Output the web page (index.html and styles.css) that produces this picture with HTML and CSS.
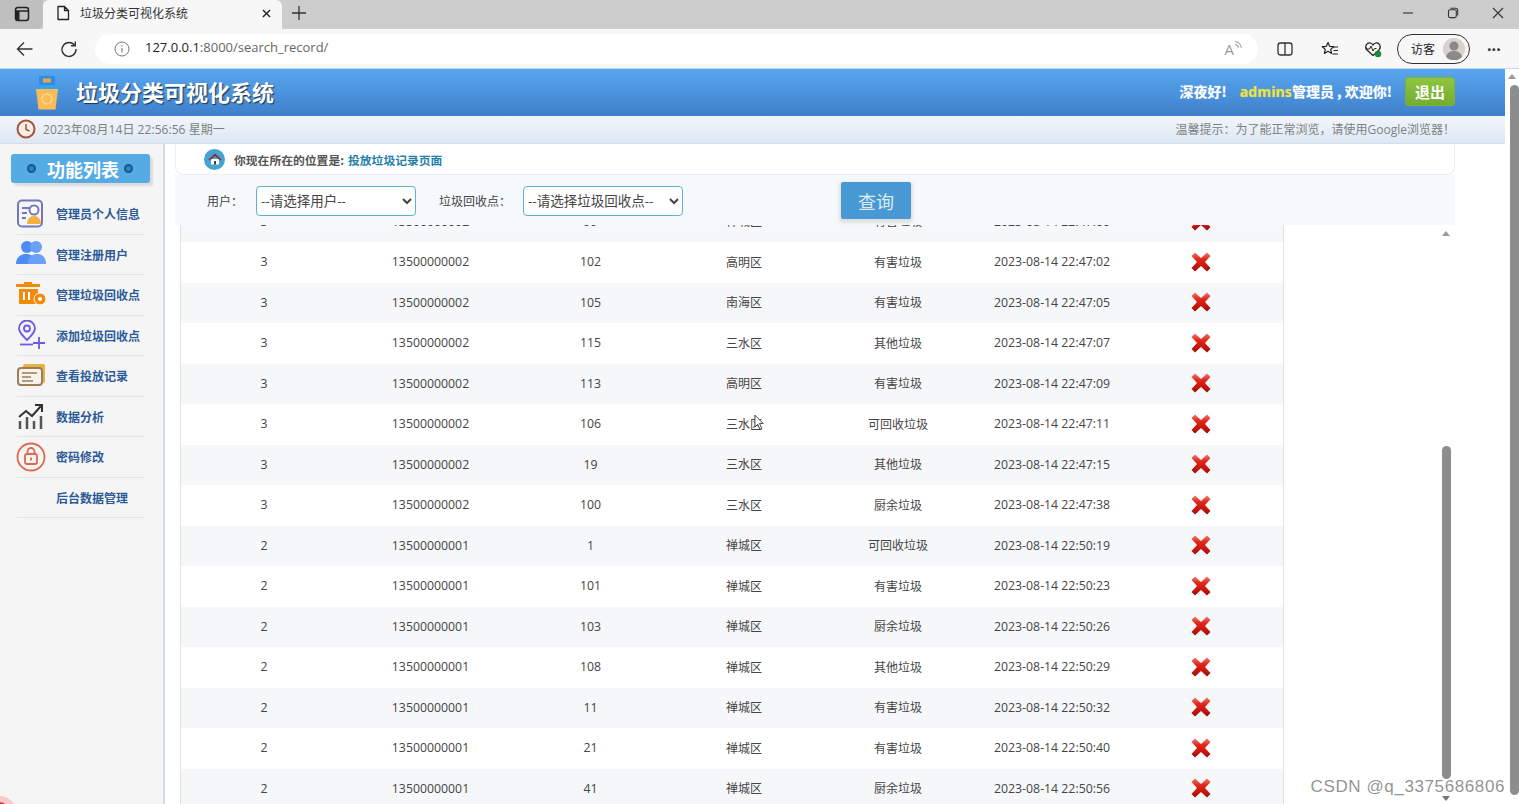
FILE: index.html
```html
<!DOCTYPE html>
<html lang="zh-CN">
<head>
<meta charset="utf-8">
<title>垃圾分类可视化系统</title>
<link rel="stylesheet" href="styles.css">
</head>
<body>
<svg class="defs" aria-hidden="true">
  <defs>
    <linearGradient id="xgrad" x1="0" y1="0" x2="0" y2="1">
      <stop offset="0" stop-color="#ee7a70"/>
      <stop offset=".35" stop-color="#e0271b"/>
      <stop offset=".75" stop-color="#c4140e"/>
      <stop offset="1" stop-color="#8e0f0a"/>
    </linearGradient>
    <symbol id="xmark" viewBox="0 0 22 22">
      <path d="M1.500 5L5 1.500 11 7 17 1.500 20.500 5 15 11 20.500 17 17 20.500 11 15 5 20.500 1.500 17 7 11z" fill="url(#xgrad)"/>
    </symbol>
  </defs>
</svg>
<div class="app">
  <div class="tabstrip">
    <div class="tabside">
      <svg class="ic20" viewBox="0 0 20 20"><rect x="3.500" y="3.500" width="13" height="13" rx="2.500" fill="none" stroke="#222" stroke-width="1.500"/><path d="M3.500 7h13" stroke="#222" stroke-width="1.500" fill="none"/><rect x="4" y="7" width="3.500" height="9" fill="#222"/></svg>
    </div>
    <div class="tab">
      <svg class="tabdoc" viewBox="0 0 14 16"><path d="M2 1.500h6.500L12.500 5.500V14.500H2z M8.500 1.500V5.500H12.500" fill="none" stroke="#222" stroke-width="1.300" stroke-linejoin="round"/></svg>
      <span class="tabtitle">垃圾分类可视化系统</span>
      <svg class="tabx" viewBox="0 0 10 10"><path d="M1 1l8 8M9 1l-8 8" stroke="#222" stroke-width="1.500"/></svg>
    </div>
    <svg class="tabplus" viewBox="0 0 14 14"><path d="M7 0v14M0 7h14" stroke="#333" stroke-width="1.300"/></svg>
    <div class="winctl">
      <svg class="winbtn" viewBox="0 0 12 12"><path d="M1 6h10" stroke="#333" stroke-width="1.100"/></svg>
      <svg class="winbtn" viewBox="0 0 12 12"><rect x="1.500" y="2.800" width="7.800" height="7.800" rx="1.500" fill="none" stroke="#333" stroke-width="1.100"/><path d="M3.500 1.300h5.200a2 2 0 0 1 2 2v5.200" fill="none" stroke="#333" stroke-width="1.100"/></svg>
      <svg class="winbtn" viewBox="0 0 12 12"><path d="M1 1l10 10M11 1L1 11" stroke="#333" stroke-width="1.100"/></svg>
    </div>
  </div>

  <div class="toolbar">
    <svg class="backbtn" viewBox="0 0 18 16"><path d="M1.500 8h15M8 1.500L1.500 8 8 14.500" fill="none" stroke="#333" stroke-width="1.400"/></svg>
    <svg class="reload" viewBox="0 0 18 18"><path d="M14.800 5.500A7 7 0 1 0 16 9" fill="none" stroke="#333" stroke-width="1.400"/><path d="M15.300 1.500v4.300h-4.300" fill="none" stroke="#333" stroke-width="1.400"/></svg>
    <div class="addr">
      <svg class="info" viewBox="0 0 16 16"><circle cx="8" cy="8" r="7" fill="none" stroke="#777" stroke-width="1"/><path d="M8 7v4.500M8 4.300v1.200" stroke="#777" stroke-width="1.100"/></svg>
      <span class="url"><b>127.0.0.1</b>:8000/search_record/</span>
      <span class="read">A<svg class="readwave" viewBox="0 0 8 9"><path d="M1 1.500a6 6 0 0 1 5.500 5.500M1 4a3.500 3.500 0 0 1 3 3" fill="none" stroke="#999" stroke-width="1"/></svg></span>
    </div>
    <svg class="tool split" viewBox="0 0 18 18"><rect x="2" y="3" width="14" height="12" rx="2.500" fill="none" stroke="#333" stroke-width="1.300"/><path d="M9 3v12" stroke="#333" stroke-width="1.300"/></svg>
    <svg class="tool fav" viewBox="0 0 18 18"><path d="M7 2.500l1.700 3.800 4 .4-3 2.700.9 4-3.600-2.100-3.600 2.100.9-4-3-2.700 4-.4z" fill="none" stroke="#222" stroke-width="1.200" stroke-linejoin="round"/><path d="M12 7h5M12.500 10.500h4.500M11.500 14h5.500" stroke="#222" stroke-width="1.100"/></svg>
    <svg class="tool health" viewBox="0 0 18 18"><path d="M9 15.500L3 10C0 6.500 3 2 6.500 3 8 3.500 8.500 4 9 5c.5-1 1-1.500 2.500-2C15 2 18 6.500 15 10z" fill="none" stroke="#222" stroke-width="1.200"/><path d="M1.500 9h4l1.500-3 2 5 1.500-2.500h2" fill="none" stroke="#222" stroke-width="1"/><circle cx="14" cy="14" r="3.300" fill="#1c8a3a"/></svg>
    <div class="guest">
      <span class="guesttxt">访客</span>
      <span class="avatar"><svg class="avatarsvg" viewBox="0 0 22 22"><circle cx="11" cy="11" r="11" fill="#d6d3cd"/><circle cx="11" cy="8" r="4.500" fill="#8b8985"/><path d="M3 19c1-5 5-6 8-6s7 1 8 6a11 11 0 0 1-16 0z" fill="#8b8985"/></svg></span>
    </div>
    <span class="more">···</span>
  </div>

  <div class="viewport">
    <div class="page">
      <header class="hdr">
        <svg class="logo" viewBox="0 0 26 34">
          <path d="M5 0h16v10H5z" fill="#2f8fe8"/>
          <path d="M9 2.500h8v4H9z" fill="#eda73a"/>
          <path d="M0 9h26l-1 4H1z" fill="#39a0ee"/>
          <path d="M2 13h22l-2.500 20.500h-17z" fill="#fbbb55"/>
          <circle cx="13" cy="23" r="5" fill="none" stroke="#f9d795" stroke-width="1.500"/>
        </svg>
        <h1 class="systitle">垃圾分类可视化系统</h1>
        <div class="welcome">
          <span class="greet">深夜好!</span>
          <span class="uname">admins</span><span>管理员 , 欢迎你!</span>
        </div>
        <a class="logout">退出</a>
      </header>

      <div class="subbar">
        <svg class="clock" viewBox="0 0 20 20"><circle cx="10" cy="10" r="8.500" fill="#f7efe6" stroke="#a9503f" stroke-width="2"/><path d="M10 5v5.500l3.500 1.500" fill="none" stroke="#a9503f" stroke-width="1.500"/></svg>
        <span class="datetime">2023年08月14日 22:56:56 星期一</span>
        <span class="tip">温馨提示：为了能正常浏览，请使用Google浏览器！</span>
      </div>

      <div class="body">
        <aside class="side">
          <div class="sidetitle"><i class="dot"></i><span>功能列表</span><i class="dot dotr"></i></div>
          <ul class="menu">
            <li class="mitem"><svg class="micon" viewBox="0 0 30 30"><rect x="2" y="1.500" width="24" height="26" rx="4" fill="none" stroke="#7476bf" stroke-width="2"/><path d="M6 9h7M6 14h5M6 19h4" stroke="#7476bf" stroke-width="2"/><circle cx="18" cy="11" r="4.500" fill="#fff" stroke="#7476bf" stroke-width="2"/><path d="M11 25c0-5 3-8 7-8s7 3 7 8z" fill="#f3b13f"/></svg><span>管理员个人信息</span></li>
            <li class="mitem"><svg class="micon" viewBox="0 0 30 30"><circle cx="11" cy="8" r="6" fill="#4f8bf5"/><circle cx="20" cy="8" r="6" fill="#6aa1f7"/><path d="M0 25c0-7 5-10 10-10s10 3 10 10z" fill="#4f8bf5"/><path d="M12 25c0-7 4-10 9-10s9 3 9 10z" fill="#6aa1f7"/></svg><span>管理注册用户</span></li>
            <li class="mitem"><svg class="micon" viewBox="0 0 30 30"><path d="M8 2h8v2H8zM0 4h24v3H0z" fill="#f28a0c"/><path d="M3 9h19v15H3z" fill="#f28a0c"/><path d="M8 12v8M13 12v8" stroke="#fff" stroke-width="2"/><circle cx="24" cy="19" r="6" fill="#f28a0c" stroke="#fff" stroke-width="1"/><circle cx="24" cy="19" r="2" fill="#fff"/></svg><span>管理垃圾回收点</span></li>
            <li class="mitem"><svg class="micon" viewBox="0 0 30 30"><path d="M11 20C6 15 3 12 3 8.500a8 8 0 0 1 16 0C19 12 16 15 11 20z" fill="none" stroke="#6a5ce0" stroke-width="1.800"/><circle cx="11" cy="8.500" r="3" fill="none" stroke="#6a5ce0" stroke-width="1.800"/><path d="M4 24.500h13" stroke="#6a5ce0" stroke-width="1.800"/><path d="M23 17v12M17 23h12" stroke="#6a5ce0" stroke-width="1.800"/></svg><span>添加垃圾回收点</span></li>
            <li class="mitem"><svg class="micon" viewBox="0 0 30 30"><path d="M7 5a2 2 0 0 1 2-2h18a2 2 0 0 1 2 2v15a2 2 0 0 1-2 2H9z" fill="#e2b440"/><rect x="2" y="7" width="24" height="17" rx="3" fill="#f7f3ea" stroke="#9b7d5e" stroke-width="2"/><path d="M6 12h15M6 16h9M6 20h11" stroke="#9b7d5e" stroke-width="1.600"/></svg><span>查看投放记录</span></li>
            <li class="mitem"><svg class="micon" viewBox="0 0 30 30"><path d="M3 16l7-6 6 5 9-10M19 4h7v7" fill="none" stroke="#333" stroke-width="2"/><path d="M4 20v8M11 16v12M18 20v8M25 15v13" stroke="#555" stroke-width="2.500"/></svg><span>数据分析</span></li>
            <li class="mitem"><svg class="micon" viewBox="0 0 30 30"><circle cx="15" cy="15" r="13.500" fill="none" stroke="#dd6a4c" stroke-width="1.800"/><rect x="9" y="12" width="12" height="10" rx="2" fill="none" stroke="#dd6a4c" stroke-width="1.800"/><path d="M11.500 12V9.500a3.500 3.500 0 0 1 7 0V12M15 15.500v3" fill="none" stroke="#dd6a4c" stroke-width="1.800"/></svg><span>密码修改</span></li>
            <li class="mitem noicon"><span>后台数据管理</span></li>
          </ul>
        </aside>

        <main class="main">
          <div class="crumb">
            <span class="homeic"><svg class="homesvg" viewBox="0 0 14 14"><path d="M3 7v5.500h8V7z" fill="#fff"/><path d="M6 9h2v3.500H6z" fill="#4a3a44"/><path d="M0.500 7.500L7 1.500l6.500 6-1.300 1L7 4 1.800 8.500z" fill="#8c2b33"/></svg></span>
            <span class="crumbtxt">你现在所在的位置是:</span>
            <a class="crumblink">投放垃圾记录页面</a>
          </div>
          <form class="search">
            <label class="lbl lbl1">用户：</label>
            <select class="sel sel1"><option>--请选择用户--</option></select>
            <label class="lbl lbl2">垃圾回收点：</label>
            <select class="sel sel2"><option>--请选择垃圾回收点--</option></select>
            <button class="qbtn" type="button">查询</button>
          </form>
          <div class="listwrap">
            <div class="tablebox">
              <table class="tbl">
                <tbody id="rows"></tbody>
              </table>
            </div>
            <div class="innerbar">
              <i class="arrow up"></i>
              <i class="thumb"></i>
              <i class="arrow down"></i>
            </div>
          </div>
        </main>
      </div>
    </div>
    <div class="outerbar">
      <i class="arrow up"></i>
      <i class="othumb"></i>
    </div>
  </div>

  <svg class="cursor" viewBox="0 0 12 18"><path d="M1 1v13l3-3 2.500 5.500 2-1L6 10h4z" fill="#fff" stroke="#333" stroke-width="1"/></svg>
  <div class="corner"></div>
  <div class="mark">CSDN @q_3375686806</div>
</div>
<script src="app.js"></script>
</body>
</html>
```
FILE: app.js
```js
var data = [
  ['3','13500000002','99','禅城区','有害垃圾','2023-08-14 22:47:00'],
  ['3','13500000002','102','高明区','有害垃圾','2023-08-14 22:47:02'],
  ['3','13500000002','105','南海区','有害垃圾','2023-08-14 22:47:05'],
  ['3','13500000002','115','三水区','其他垃圾','2023-08-14 22:47:07'],
  ['3','13500000002','113','高明区','有害垃圾','2023-08-14 22:47:09'],
  ['3','13500000002','106','三水区','可回收垃圾','2023-08-14 22:47:11'],
  ['3','13500000002','19','三水区','其他垃圾','2023-08-14 22:47:15'],
  ['3','13500000002','100','三水区','厨余垃圾','2023-08-14 22:47:38'],
  ['2','13500000001','1','禅城区','可回收垃圾','2023-08-14 22:50:19'],
  ['2','13500000001','101','禅城区','有害垃圾','2023-08-14 22:50:23'],
  ['2','13500000001','103','禅城区','厨余垃圾','2023-08-14 22:50:26'],
  ['2','13500000001','108','禅城区','其他垃圾','2023-08-14 22:50:29'],
  ['2','13500000001','11','禅城区','有害垃圾','2023-08-14 22:50:32'],
  ['2','13500000001','21','禅城区','有害垃圾','2023-08-14 22:50:40'],
  ['2','13500000001','41','禅城区','厨余垃圾','2023-08-14 22:50:56']
];
var x = '<svg class="del" viewBox="0 0 22 22"><use href="#xmark"/></svg>';
document.getElementById('rows').innerHTML = data.map(function (r, i) {
  var cells = r.map(function (c) { return '<td>' + c + '</td>'; }).join('');
  return '<tr class="' + (i % 2 === 0 ? 'odd' : 'even') + '">' + cells + '<td class="delcell">' + x + '</td></tr>';
}).join('');
```
FILE: styles.css
```css
* { box-sizing: border-box; }
html, body { margin: 0; height: 100%; overflow: hidden; }
body { font-family: "Open Sans", "Noto Sans CJK SC", sans-serif; font-size: 12px; color: #444; background: #fff; }
.defs { display: block; width: 0; height: 0; }
.app { position: relative; height: 804px; display: flex; flex-direction: column; overflow: hidden; }

/* browser chrome */
.tabstrip { height: 29px; background: #cdcdcd; display: flex; align-items: center; flex: none; }
.tabside { width: 43px; height: 29px; background: #bfbfbf; display: flex; align-items: center; justify-content: center; border-radius: 0 0 6px 0; padding-bottom: 2px; }
.ic20 { width: 20px; height: 20px; }
.tab { width: 239px; height: 29px; background: #f7f7f7; border-radius: 6px 6px 0 0; display: flex; align-items: center; padding-left: 13px; padding-bottom: 3px; }
.tabdoc { width: 14px; height: 16px; }
.tabtitle { margin-left: 10px; font-size: 12px; color: #333; }
.tabx { width: 9px; height: 9px; margin-left: auto; margin-right: 11px; }
.tabplus { width: 14px; height: 14px; margin-left: 10px; margin-top: -3px; }
.winctl { margin-left: auto; display: flex; gap: 33px; padding-right: 15px; margin-top: -3px; }
.winbtn { width: 12px; height: 12px; }

.toolbar { height: 39px; background: #f7f7f7; display: flex; align-items: center; flex: none; padding-left: 16px; }
.backbtn { width: 18px; height: 16px; }
.reload { width: 18px; height: 18px; margin-left: 26px; }
.addr { width: 1163px; height: 30px; margin-left: 17px; background: #fff; border-radius: 15px; display: flex; align-items: center; padding-left: 19px; }
.info { width: 16px; height: 16px; }
.url { margin-left: 15px; font-size: 13px; color: #666; margin-top: -3px; }
.url b { font-weight: 400; color: #222; }
.read { margin-left: auto; margin-right: 15px; font-size: 15px; line-height: 20px; color: #999; display: flex; align-items: flex-start; }
.readwave { width: 9px; height: 10px; margin-top: 1px; }
.tool { width: 18px; height: 18px; }
.split { margin-left: 18px; }
.fav { margin-left: 27px; }
.health { margin-left: 25px; }
.guest { width: 73px; height: 30px; margin-left: 15px; border: 1.500px solid #333; border-radius: 15px; display: flex; align-items: center; padding-left: 13px; }
.guesttxt { font-size: 12px; color: #222; }
.avatar { margin-left: 8px; display: flex; }
.avatarsvg { width: 22px; height: 22px; }
.more { margin-left: 17px; font-size: 16px; font-weight: 700; color: #333; letter-spacing: 0; }

/* page frame */
.viewport { flex: 1; display: flex; min-height: 0; border-top: 1px solid #c8d6e6; }
.page { flex: 1; display: flex; flex-direction: column; min-width: 0; }
.outerbar { width: 14px; flex: none; display: flex; flex-direction: column; align-items: center; background: #fff; padding-top: 5px; }
.arrow { display: block; width: 0; height: 0; border-left: 4px solid transparent; border-right: 4px solid transparent; }
.arrow.up { border-bottom: 5px solid #9a9a9a; }
.arrow.down { border-top: 5px solid #777; }
.othumb { display: block; width: 9px; height: 710px; margin-top: 6px; margin-left: 4px; border-radius: 5px; background: #8d8d8d; }

/* header */
.hdr { height: 47px; flex: none; background: linear-gradient(#58a7ef, #3f7fca); display: flex; align-items: center; padding-left: 34px; padding-right: 50px; }
.logo { width: 26px; height: 34px; }
.systitle { margin: -4px 0 0 16px; font-size: 22px; font-weight: 700; color: #fff; letter-spacing: 0; text-shadow: 1px 1px 1px #16304f; font-family: "Noto Sans CJK SC", sans-serif; }
.welcome { margin-left: auto; margin-top: -4px; color: #fff; font-size: 14px; font-weight: 700; font-family: "Noto Sans CJK SC", sans-serif; text-shadow: 0 0 1px rgba(255,255,255,.5); }
.greet { margin-right: 10px; }
.uname { color: #eee22c; font-family: "Open Sans", sans-serif; letter-spacing: .1px; }
.logout { margin-left: 13px; width: 50px; height: 29px; margin-top: -2px; border-radius: 3px; background: linear-gradient(#8ec63f, #74ad2e); border: 1px solid #7fb13a; color: #fff; font-size: 15px; font-weight: 700; display: flex; align-items: center; justify-content: center; padding-bottom: 1px; }

.subbar { height: 28px; flex: none; background: linear-gradient(#f2f6fb, #dde8f3); border-bottom: 1px solid #d3deea; display: flex; align-items: center; padding-left: 16px; padding-right: 50px; color: #808080; font-size: 12px; padding-bottom: 2px; }
.clock { width: 20px; height: 20px; }
.datetime { margin-left: 7px; letter-spacing: .05px; }
.tip { margin-left: auto; }

/* body */
.body { flex: 1; display: flex; min-height: 0; }
.side { width: 165px; flex: none; background: #f5f5f5; border-right: 2px solid #d3dde8; padding: 10px 19px 0 11px; }
.sidetitle { width: 139px; height: 29px; background: #55abe4; border-radius: 3px; box-shadow: 3px 3px 2px #dcdcdc; display: flex; align-items: center; gap: 11px; padding-left: 16px; color: #fff; font-size: 18px; font-weight: 700; font-family: "Noto Sans CJK SC", sans-serif; }
.dot { width: 9px; height: 9px; border-radius: 50%; background: #2a86c0; border: 2px solid #17598e; display: block; flex: none; }
.dotr { margin-left: -6px; }
.menu { list-style: none; margin: 11px 0 0; padding: 0 0 0 6px; }
.mitem { height: 40.500px; border-bottom: 1px solid #e4e4e4; display: flex; align-items: center; color: #2c5a97; font-size: 12px; font-weight: 700; font-family: "Noto Sans CJK SC", sans-serif; }
.micon { width: 30px; height: 30px; margin-right: 10px; flex: none; margin-left: -1px; }
.noicon { padding-left: 39px; }

.main { flex: 1; min-width: 0; margin-left: 10px; margin-right: 50px; display: flex; flex-direction: column; }
.crumb { height: 31px; flex: none; background: #fff; border: 1px solid #e9eff5; border-top: 0; border-radius: 0 0 8px 8px; display: flex; align-items: center; padding-left: 28px; font-weight: 700; font-size: 11.800px; font-family: "Noto Sans CJK SC", sans-serif; color: #555; }
.homeic { width: 21px; height: 21px; border-radius: 50%; background: #45a5cf; display: flex; align-items: center; justify-content: center; margin-right: 9px; }
.homesvg { width: 14px; height: 14px; }
.crumblink { margin-left: 4px; color: #257ea6; }

.search { height: 50px; flex: none; background: #f5f9fc; display: flex; align-items: center; padding-left: 32px; position: relative; padding-top: 2px; }
.lbl { font-size: 12px; color: #444; }
.lbl1 { width: 49px; }
.lbl2 { width: 84px; margin-left: 23px; }
.sel { height: 30px; width: 160px; font-size: 13.500px; font-family: "Open Sans", "Noto Sans CJK SC", sans-serif; color: #444; border: 1.500px solid #5fb3cf; border-radius: 4px; background: #fff; padding: 0; }
.qbtn { margin-left: 158px; width: 70px; height: 37px; margin-top: -1px; border: 0; border-radius: 2px; background: #4899d3; box-shadow: 0 2px 3px 2px #e0e0e0; color: #dfeaf3; font-size: 18px; font-family: "Noto Sans CJK SC", sans-serif; }

.listwrap { flex: 1; min-height: 0; display: flex; padding-left: 5px; background: #fff; }
.tablebox { width: 1104px; flex: none; overflow: hidden; border-left: 1px solid #e1e1e1; border-right: 1px solid #e1e1e1; }
.tbl { width: 1102px; margin-top: -23.500px; border-collapse: collapse; table-layout: fixed; }
.tbl td { height: 40.500px; padding: 0 0 1px; text-align: center; font-size: 12.300px; color: #444; white-space: nowrap; }
.tbl td:nth-child(1) { width: 166px; }
.tbl td:nth-child(2) { width: 167px; }
.tbl td:nth-child(3) { width: 153px; }
.tbl td:nth-child(4) { width: 154px; font-size: 12px; }
.tbl td:nth-child(5) { width: 154px; font-size: 12px; }
.tbl td:nth-child(6) { width: 154px; }
.odd { background: #f5f7f9; }
.even { background: #fff; }
.tbl .delcell { padding-right: 10px; }
.del { width: 22px; height: 22px; display: block; margin: 0 auto; }

.innerbar { width: 12px; margin-left: 156px; flex: none; display: flex; flex-direction: column; align-items: center; padding-top: 6px; }
.thumb { display: block; width: 9px; height: 333px; margin-top: 210px; border-radius: 5px; background: #8d8d8d; }
.innerbar .arrow.down { margin-top: 17px; }

/* overlays */
.cursor { position: absolute; left: 754px; top: 414px; width: 11px; height: 17px; }
.corner { position: absolute; left: -16px; top: 796px; width: 32px; height: 32px; border-radius: 50%; background: #f9c9cb; }
.corner::after { content: ""; position: absolute; left: 8px; top: 6px; width: 16px; height: 16px; border-radius: 50%; background: #ee3a3e; }
.mark { position: absolute; right: 14px; top: 777px; font-family: "Liberation Sans", sans-serif; font-size: 17px; color: rgba(110,110,110,.75); letter-spacing: .6px; }
```
